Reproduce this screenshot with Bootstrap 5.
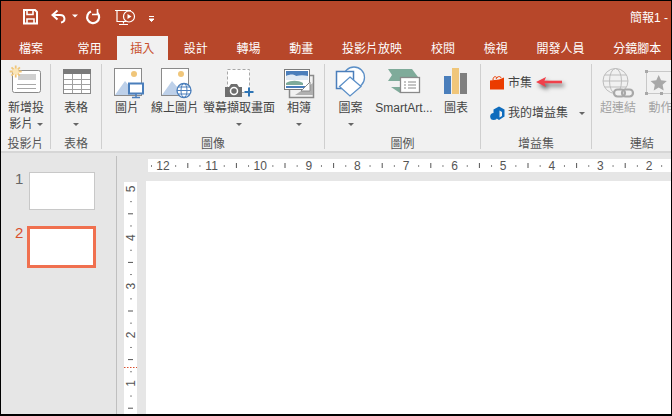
<!DOCTYPE html>
<html lang="zh-Hant">
<head>
    <title>簡報1 - PowerPoint</title>
    <meta charset="UTF-8">
    <link href="https://cdn.jsdelivr.net/npm/bootstrap@5.3.0/dist/css/bootstrap.min.css" rel="stylesheet">
    <style>
        html, body { height: 100%; overflow: hidden; background: #000; }
        body { font-family: "Liberation Sans", "Noto Sans CJK TC", sans-serif; font-size: 12px; line-height: 16px; color: #444; }
        svg { display: block; flex-shrink: 0; }

        .app { width: 672px; height: 416px; border: 1px solid #000; border-bottom-width: 2px; background: #e6e6e6; overflow: hidden; }

        .title-bar { height: 35px; background: #b7472a; color: #fff; }
        .qat { padding-left: 22px; padding-top: 8px; }
        .doc-title { padding-top: 9px; white-space: nowrap; width: 41px; }

        .tabs { height: 24px; background: #b7472a; flex-wrap: nowrap; white-space: nowrap; }
        .tabs .nav-link { color: #fff; padding: 5px 14.4px 0; height: 24px; font-size: 12px; line-height: 16px; border-radius: 0; }
        .tabs .nav-link:first-child { padding-left: 18px; padding-right: 20px; }
        .tabs .nav-link.active { background: #f1f1f1; color: #c8502e; padding: 5px 13.5px 0; margin-left: 1px; margin-right: 1.5px; }

        .ribbon { height: 93px; background: #f1f1f1; border-bottom: 2px solid #d6d6d6; flex-shrink: 0; white-space: nowrap; }
        .rb-group { height: 85px; margin-top: 4px; border-right: 1px solid #cfcfcf; flex-shrink: 0; }
        .rb-tools { height: 70px; }
        .rb-label { height: 16px; margin-bottom: -4px; margin-top: 2px; text-align: center; color: #555; }
        .tool { flex-shrink: 0; text-align: center; }
        .tool-icon { height: 35px; margin-bottom: 1px; }
        .caret { display: inline-block; width: 0; height: 0; border-left: 3px solid transparent; border-right: 3px solid transparent; border-top: 3px solid #666; vertical-align: 2px; }
        .caret-row { height: 16px; line-height: 16px; }
        .off { color: #a3a3a3; }
        .g-slide { width: 50px; }
        .g-table { width: 51px; }
        .g-image { width: 223px; }
        .g-illus { width: 156px; }
        .g-addin { width: 111px; }
        .g-link { width: 100px; border-right: 0; }
        .w-50px { width: 50px; }
        .t-pic { width: 48px; margin-left: 1px; }
        .t-web { width: 46px; }
        .t-shot { width: 84px; }
        .t-album { width: 36px; }
        .t-shape { width: 49px; margin-left: 1px; }
        .t-smart { width: 58px; }
        .t-chart { width: 46px; }
        .t-hyper { width: 50px; margin-left: 1px; }
        .t-action { width: 35px; }
        .addin-row { height: 18px; padding-left: 9px; gap: 3px; }
        .addin-row.first { margin-top: 10px; margin-bottom: 12px; }
        .arrow { filter: drop-shadow(2px 3px 2px rgba(0,0,0,.6)); margin-left: 1px; margin-top: -3px; }

        .workspace { min-height: 0; }
        .thumbs { width: 116px; flex-shrink: 0; border-right: 1px solid #bfbfbf; margin-top: 3px; padding-top: 16px; }
        .thumb-row { padding-left: 13px; }
        .thumb-no { width: 15px; padding-left: 1px; font-size: 15px; line-height: 16px; color: #666; margin-top: -1px; }
        .thumb { width: 66px; height: 38px; background: #fff; border: 1px solid #c8c8c8; }
        .thumb-row.current { margin-top: 16px; }
        .thumb-row.current .thumb-no { color: #d9502e; width: 13px; }
        .thumb-row.current .thumb { width: 69px; height: 42px; border: 3px solid #f0704f; }

        .editor { min-width: 0; padding-top: 6px; padding-left: 7px; }
        .h-ruler { height: 13px; margin-left: 24px; margin-bottom: 9px; background: #fff; }
        .v-ruler { width: 13px; margin-top: 1px; margin-right: 9px; background: #fff; }
        .slide { background: #fff; }
        .ruler-text { font-family: "Liberation Sans", sans-serif; font-size: 12px; fill: #555; text-anchor: middle; }
    </style>
</head>
<body>
<div class="app d-flex flex-column">

    <!-- title bar -->
    <div class="title-bar d-flex justify-content-between flex-shrink-0">
        <div class="qat d-flex">
            <svg width="136" height="20" viewBox="0 0 136 20" fill="none" stroke="#fff" stroke-width="2">
                <!-- save -->
                <path d="M1 1h11l2 2v11.500H1z"/>
                <path d="M4 1v4.500h6V1M4 14.500v-4.500h7v4.500" stroke-width="1.600"/>
                <!-- undo -->
                <path d="M34.500 1.500L29.500 6l5 4.500M30 6h7c5.500 0 6 6.500 1 7.500"/>
                <path d="M49 5.500h6l-3 3z" fill="#fff" stroke="none"/>
                <!-- repeat -->
                <path d="M68 2.500a6 6 0 1 0 6.500 1.500" stroke-width="2.200"/>
                <path d="M74.500 0v5.500h-5.500" stroke-width="1.600"/>
                <!-- from beginning -->
                <g stroke-width="1.200">
                    <path d="M92 1.500h16M94 2v10.500h13M100.500 12.500v2M96 15.500h9"/>
                    <circle cx="106" cy="7.500" r="5.500" fill="#b7472a"/>
                    <path d="M104.500 5l4 2.500-4 2.500z" fill="#fff" stroke="none"/>
                </g>
                <!-- customize -->
                <path d="M126 7.500h5M126 10h5l-2.500 2.500z" stroke-width="1" fill="#fff"/>
            </svg>
        </div>
        <div class="doc-title">簡報1 -</div>
    </div>

    <!-- tabs -->
    <nav class="nav tabs flex-shrink-0">
        <a class="nav-link" href="#">檔案</a>
        <a class="nav-link" href="#">常用</a>
        <a class="nav-link active" href="#">插入</a>
        <a class="nav-link" href="#">設計</a>
        <a class="nav-link" href="#">轉場</a>
        <a class="nav-link" href="#">動畫</a>
        <a class="nav-link" href="#">投影片放映</a>
        <a class="nav-link" href="#">校閱</a>
        <a class="nav-link" href="#">檢視</a>
        <a class="nav-link" href="#">開發人員</a>
        <a class="nav-link" href="#">分鏡腳本</a>
    </nav>

    <!-- ribbon -->
    <div class="ribbon d-flex">
        <div class="rb-group g-slide d-flex flex-column">
            <div class="rb-tools d-flex">
                <div class="tool w-50px">
                    <svg class="tool-icon" width="50" height="35" viewBox="0 0 50 35">
                        <rect x="11.500" y="6.500" width="28" height="22" rx="2" fill="#fff" stroke="#8a8a8a"/>
                        <rect x="17" y="10" width="18" height="6" fill="#d0d0d0"/>
                        <path d="M16 20.500h19M16 24.500h19" stroke="#a8a8a8"/>
                        <path d="M14.700 1.500v12M8.700 7.500h12M10.500 3.300l8.400 8.400M18.900 3.300l-8.400 8.400" stroke="#f0c67a" stroke-width="1.800"/>
                        <circle cx="14.700" cy="7.500" r="3" fill="#fbe6b8"/>
                    </svg>
                    <div>新增投</div>
                    <div class="caret-row">影片 <span class="caret"></span></div>
                </div>
            </div>
            <div class="rb-label">投影片</div>
        </div>

        <div class="rb-group g-table d-flex flex-column">
            <div class="rb-tools d-flex">
                <div class="tool w-50px">
                    <svg class="tool-icon" width="50" height="35" viewBox="0 0 50 35">
                        <rect x="12.500" y="5.500" width="27" height="24" fill="#fff" stroke="#8a8a8a"/>
                        <rect x="12" y="5" width="28" height="5" fill="#7a7a7a"/>
                        <path d="M21.500 10v19M30.500 10v19M13 15.500h26M13 20.500h26M13 25.500h26" stroke="#a0a0a0"/>
                    </svg>
                    <div>表格</div>
                    <div class="caret-row"><span class="caret"></span></div>
                </div>
            </div>
            <div class="rb-label">表格</div>
        </div>

        <div class="rb-group g-image d-flex flex-column">
            <div class="rb-tools d-flex">
                <div class="tool t-pic">
                    <svg class="tool-icon" width="48" height="35" viewBox="0 0 48 35">
                        <rect x="11.500" y="4.500" width="27" height="27" fill="#fff" stroke="#8a8a8a"/>
                        <circle cx="31" cy="10" r="3" fill="#f0c67a"/>
                        <path d="M12 31l10-14 12 14z" fill="#bdd0e9"/>
                        <rect x="26" y="19.500" width="14" height="10" fill="#fff" stroke="#4a7ebb" stroke-width="2"/>
                        <path d="M33 30v3M29 33.500h8" stroke="#4a7ebb" stroke-width="1.500"/>
                    </svg>
                    <div>圖片</div>
                </div>
                <div class="tool t-web">
                    <svg class="tool-icon" width="46" height="35" viewBox="0 0 46 35">
                        <rect x="10.500" y="4.500" width="27" height="27" fill="#fff" stroke="#8a8a8a"/>
                        <circle cx="30" cy="10" r="3" fill="#f0c67a"/>
                        <path d="M11 31l10-14 12 14z" fill="#bdd0e9"/>
                        <circle cx="33" cy="26.500" r="7" fill="#fff" stroke="#4a7ebb" stroke-width="1.300"/>
                        <ellipse cx="33" cy="26.500" rx="3" ry="7" fill="none" stroke="#4a7ebb"/>
                        <path d="M26 26.500h14M27 23h12M27 30h12" stroke="#4a7ebb"/>
                    </svg>
                    <div>線上圖片</div>
                </div>
                <div class="tool t-shot">
                    <svg class="tool-icon" width="84" height="35" viewBox="0 0 84 35">
                        <rect x="30.500" y="5.500" width="22" height="23" fill="#fff" stroke="#a8a8a8" stroke-dasharray="3 2"/>
                        <path d="M28 23h4l2-3h6l2 3h3v10H28z" fill="#6e6e6e"/>
                        <circle cx="37" cy="27" r="3.500" fill="#6e6e6e" stroke="#fff" stroke-width="1.500"/>
                        <path d="M52 23.500v9M47.500 28h9" stroke="#2f75b5" stroke-width="2"/>
                    </svg>
                    <div>螢幕擷取畫面</div>
                    <div class="caret-row"><span class="caret"></span></div>
                </div>
                <div class="tool t-album">
                    <svg class="tool-icon" width="36" height="35" viewBox="0 0 36 35">
                        <rect x="8.500" y="11.500" width="24" height="22" fill="#f1f1f1" stroke="#8a8a8a" stroke-width="1.500"/>
                        <path d="M14 31l18-12v12z" fill="#b0b0b0"/>
                        <rect x="3.500" y="5.500" width="25" height="20" fill="#fff" stroke="#7a7a7a"/>
                        <rect x="5" y="7" width="22" height="5" fill="#4a7ebb"/>
                        <path d="M5 12c4-2 8-2 10 0 4-1 8-1 12 0v4H5z" fill="#dfe9f3"/>
                        <path d="M5 19c5-3 12-3 17 0v2H5z" fill="#7fab9a"/>
                        <rect x="5" y="22" width="22" height="2" fill="#4a7ebb"/>
                        <path d="M20 27l9-9v9z" fill="#fff" stroke="#8a8a8a"/>
                    </svg>
                    <div>相簿</div>
                    <div class="caret-row"><span class="caret"></span></div>
                </div>
            </div>
            <div class="rb-label">圖像</div>
        </div>

        <div class="rb-group g-illus d-flex flex-column">
            <div class="rb-tools d-flex">
                <div class="tool t-shape">
                    <svg class="tool-icon" width="49" height="35" viewBox="0 0 49 35">
                        <circle cx="28" cy="13.500" r="10.500" fill="#fff" stroke="#5b8fc7" stroke-width="1.300"/>
                        <rect x="10.500" y="7.500" width="17" height="17" fill="#fff" stroke="#4a7ebb" stroke-width="1.500"/>
                        <path d="M24 13l11 9.500-11 9.500-10.500-9.500z" fill="#fff" stroke="#5b8fc7" stroke-width="1.300"/>
                    </svg>
                    <div>圖案</div>
                    <div class="caret-row"><span class="caret"></span></div>
                </div>
                <div class="tool t-smart">
                    <svg class="tool-icon" width="58" height="35" viewBox="0 0 58 35">
                        <path d="M13 5h24l6 8H26v4H13l4-6z" fill="#7fab9a"/>
                        <path d="M16 23h9v6z" fill="#7fab9a"/>
                        <rect x="25.500" y="13.500" width="19" height="15" fill="#fff" stroke="#8a8a8a" stroke-width="1.300"/>
                        <path d="M29 18h2M33 18h8M29 21h2M33 21h8M29 24h2M33 24h8" stroke="#8a8a8a"/>
                    </svg>
                    <div>SmartArt...</div>
                </div>
                <div class="tool t-chart">
                    <svg class="tool-icon" width="46" height="35" viewBox="0 0 46 35">
                        <rect x="11" y="12" width="7" height="18" fill="#4a7ebb"/>
                        <rect x="19" y="4" width="7" height="26" fill="#f0c67a"/>
                        <rect x="27" y="9" width="7" height="21" fill="#7f7f7f"/>
                    </svg>
                    <div>圖表</div>
                </div>
            </div>
            <div class="rb-label">圖例</div>
        </div>

        <div class="rb-group g-addin d-flex flex-column">
            <div class="rb-tools d-flex flex-column">
                <div class="addin-row first d-flex align-items-center">
                    <svg width="15" height="17" viewBox="0 0 15 17">
                        <path d="M3 5c0-4 3-4 4-2M6 4c1-3 5-3 5-1" fill="none" stroke="#eb3c00"/>
                        <path d="M0 5.500l9-1 5-2v12H0z" fill="#eb3c00"/>
                    </svg>
                    <span>市集</span>
                    <svg class="arrow" width="28" height="12" viewBox="0 0 28 12">
                        <path d="M7 6h19" stroke="#f0404a" stroke-width="2.600"/>
                        <path d="M0 6l10-5-2 5 2 5z" fill="#f0404a"/>
                    </svg>
                </div>
                <div class="addin-row d-flex align-items-center">
                    <svg width="15" height="15" viewBox="0 0 15 15">
                        <path d="M3.500 3.500l5.500-3 5.500 3v7l-5.500 3.500-5.500-3.500z" fill="#0f6cbd"/>
                        <path d="M9.500 4.500l2.500 1.500v4l-2.500 1.500z" fill="#f1f1f1"/>
                        <circle cx="3.700" cy="10.500" r="3.500" fill="#0f6cbd"/>
                    </svg>
                    <span>我的增益集</span>
                    <span class="caret ms-2 align-self-center"></span>
                </div>
            </div>
            <div class="rb-label">增益集</div>
        </div>

        <div class="rb-group g-link d-flex flex-column">
            <div class="rb-tools d-flex">
                <div class="tool t-hyper off">
                    <svg class="tool-icon" width="50" height="35" viewBox="0 0 50 35" fill="none" stroke="#bdbdbd">
                        <circle cx="22.500" cy="17" r="12.500"/>
                        <ellipse cx="22.500" cy="17" rx="6" ry="12.500"/>
                        <path d="M10 17h25M11.500 11h22M11.500 23h22"/>
                        <rect x="21" y="25.500" width="11" height="7" rx="3.500" stroke="#a8a8a8" stroke-width="2.200" fill="#f1f1f1"/>
                        <rect x="29" y="25.500" width="11" height="7" rx="3.500" stroke="#a8a8a8" stroke-width="2.200"/>
                    </svg>
                    <div>超連結</div>
                </div>
                <div class="tool t-action off">
                    <svg class="tool-icon" width="44" height="35" viewBox="0 0 44 35">
                        <rect x="3.500" y="7.500" width="30" height="22" fill="none" stroke="#c8c8c8"/>
                        <path d="M2 6h3v3H2zM2 28h3v3H2zM17 28h3v3h-3z" fill="#a8a8a8"/>
                        <path d="M15.700 11l2.400 5.200 5.700.7-4.200 3.900 1.100 5.600-5-2.800-5 2.800 1.100-5.600-4.200-3.900 5.700-.7z" fill="#a8a8a8"/>
                    </svg>
                    <div>動作</div>
                </div>
            </div>
            <div class="rb-label">連結</div>
        </div>
    </div>

    <!-- slide pane + editor -->
    <div class="workspace d-flex flex-grow-1">
        <div class="thumbs">
            <div class="thumb-row d-flex">
                <div class="thumb-no">1</div>
                <div class="thumb"></div>
            </div>
            <div class="thumb-row current d-flex">
                <div class="thumb-no">2</div>
                <div class="thumb"></div>
            </div>
        </div>
        <div class="editor d-flex flex-column flex-grow-1">
            <div class="h-ruler flex-shrink-0"><svg id="hRuler" width="530" height="13"></svg></div>
            <div class="d-flex flex-grow-1">
                <div class="v-ruler flex-shrink-0"><svg id="vRuler" width="13" height="240"></svg></div>
                <div class="slide flex-grow-1"></div>
            </div>
        </div>
    </div>
</div>

<script>
    // rulers: one unit is 48.6px, a mark every quarter
    const unit = 48.6;

    function buildHRuler() {
        let out = "";
        for (let i = 0; i < 11; i++) {
            const x = 15 + i * unit;
            out += `<text class="ruler-text" x="${x}" y="11">${12 - i}</text>`;
            out += `<rect x="${x + unit / 4}" y="6" width="1" height="2" fill="#888"/>`;
            out += `<rect x="${x + unit / 2}" y="4" width="1" height="5" fill="#555"/>`;
            out += `<rect x="${x + unit * 3 / 4}" y="6" width="1" height="2" fill="#888"/>`;
        }
        out += `<rect x="3" y="6" width="1" height="2" fill="#888"/>`;
        document.getElementById("hRuler").innerHTML = out;
    }

    function buildVRuler() {
        let out = "";
        for (let i = 0; i < 5; i++) {
            const y = 7 + i * unit;
            out += `<text class="ruler-text" transform="translate(11 ${y}) rotate(-90)">${5 - i}</text>`;
            out += `<rect x="6" y="${y + unit / 4}" width="2" height="1" fill="#888"/>`;
            out += `<rect x="4" y="${y + unit / 2}" width="5" height="1" fill="#555"/>`;
            out += `<rect x="6" y="${y + unit * 3 / 4}" width="2" height="1" fill="#888"/>`;
        }
        out += `<path d="M0 185.500h13" stroke="#d9502e" stroke-dasharray="1.500 1.500"/>`;
        document.getElementById("vRuler").innerHTML = out;
    }

    buildHRuler();
    buildVRuler();
</script>
<script src="https://cdn.jsdelivr.net/npm/bootstrap@5.3.0/dist/js/bootstrap.bundle.min.js"></script>
</body>
</html>
